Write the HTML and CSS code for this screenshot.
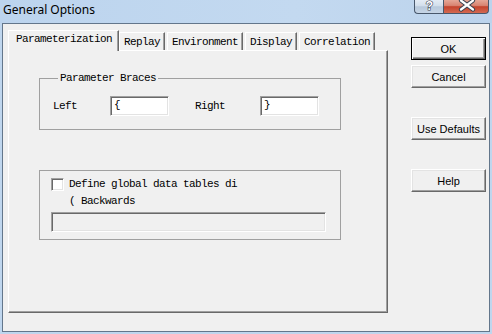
FILE: index.html
```html
<!DOCTYPE html>
<html>
<head>
<meta charset="utf-8">
<link rel="stylesheet" href="styles.css">
</head>
<body>
<div class="window">
  <div class="titlebar">
    <span class="title">General Options</span>
    <div class="caption">
      <div class="cbtn help">
        <svg width="29" height="14" viewBox="0 0 29 14"><text x="14.5" y="11" text-anchor="middle" class="qmark">?</text></svg>
      </div>
      <div class="cbtn close">
        <svg width="46" height="14" viewBox="0 0 46 14">
          <path d="M17 1.5 L29 10.5 M29 1.5 L17 10.5" stroke="#3a4250" stroke-width="4.2" stroke-linecap="round"/>
          <path d="M17 1.5 L29 10.5 M29 1.5 L17 10.5" stroke="#ffffff" stroke-width="2.2" stroke-linecap="round"/>
        </svg>
      </div>
    </div>
  </div>
  <div class="client">
    <div class="tabctl">
      <div class="tabs">
        <div class="tab selected">Parameterization</div>
        <div class="tab">Replay</div>
        <div class="tab">Environment</div>
        <div class="tab">Display</div>
        <div class="tab">Correlation</div>
      </div>
      <div class="panel">
        <fieldset class="group g1">
          <legend>Parameter Braces</legend>
          <div class="row">
            <span class="lbl lbl-left">Left</span>
            <div class="edit">{</div>
            <span class="lbl lbl-right">Right</span>
            <div class="edit">}</div>
          </div>
        </fieldset>
        <div class="group g2">
          <div class="checkrow"><span class="check"></span><span>Define global data tables di</span></div>
          <div class="line2">( Backwards</div>
          <div class="edit disabled wide"></div>
        </div>
      </div>
    </div>
    <div class="btns">
      <div class="btn default">OK</div>
      <div class="btn">Cancel</div>
      <div class="btn gap">Use Defaults</div>
      <div class="btn gap">Help</div>
    </div>
  </div>
</div>
</body>
</html>
```
FILE: styles.css
```css
html, body { margin: 0; padding: 0; }
body { background: #bfd6ee; }

.window {
  width: 492px;
  height: 334px;
  display: flex;
  flex-direction: column;
  background: #bfd6ee;
  overflow: hidden;
}

.titlebar {
  height: 23px;
  flex: none;
  display: flex;
  justify-content: space-between;
  align-items: flex-start;
  background: linear-gradient(90deg, #bcd4ee, #c3d9f0 60%, #bcd3ec);
}
.title {
  font-family: "Noto Sans", sans-serif;
  font-size: 12px;
  line-height: 16px;
  margin: 2px 0 0 3px;
  color: #000;
}
.caption { display: flex; margin-right: 3px; }
.cbtn {
  height: 14px;
  box-sizing: border-box;
  border: 1px solid #48586c;
  border-top: none;
}
.cbtn svg { display: block; margin-top: -1px; }
.help {
  width: 29px;
  border-right: none;
  border-bottom-left-radius: 4px;
  background: linear-gradient(#e4ecf5 0%, #d2deeb 45%, #b8c9dc 52%, #c6d5e6 100%);
}
.qmark {
  font-family: "Liberation Sans", sans-serif;
  font-weight: bold;
  font-size: 12px;
  fill: #fff;
  stroke: #3a4250;
  stroke-width: 1.2px;
  paint-order: stroke;
}
.close {
  width: 46px;
  border-bottom-right-radius: 4px;
  background: linear-gradient(#e5a797 0%, #d88472 42%, #c4432d 52%, #d46a52 100%);
}

.client {
  flex: 1;
  margin: 0 2px 2px 2px;
  border: 1px solid #63768b;
  background: #f0f0f0;
  display: flex;
  align-items: flex-start;
  padding: 6px 0 0 5px;
  box-sizing: border-box;
}

.tabctl {
  width: 380px;
  display: flex;
  flex-direction: column;
  font-family: "Liberation Mono", monospace;
  font-size: 11px;
  letter-spacing: -0.6px;
  color: #000;
}
.tabs {
  display: flex;
  align-items: flex-end;
  height: 20px;
  position: relative;
  z-index: 1;
}
.tab {
  height: 18px;
  box-sizing: border-box;
  border-top: 1px solid #fff;
  border-left: 1px solid #fff;
  border-right: 1px solid #696969;
  box-shadow: inset -1px 0 0 #a0a0a0;
  padding: 0 4px 0 4px;
  line-height: 18px;
  margin-right: 2px;
  background: #f0f0f0;
  white-space: nowrap;
}
.tab.selected {
  height: 21px;
  margin-bottom: -1px;
  margin-right: 0;
  padding: 0 6px 0 7px;
  line-height: 17px;
}

.panel {
  height: 263px;
  box-sizing: border-box;
  border: 1px solid;
  border-color: #fff #696969 #696969 #fff;
  box-shadow: inset -1px -1px 0 #a0a0a0;
  padding: 20px 0 0 30px;
}

.group {
  width: 302px;
  box-sizing: border-box;
  margin: 0;
  border: 1px solid #a0a0a0;
}
.g1 {
  padding: 11px 0 13px 13px;
}
.g1 legend {
  padding: 0 2px;
  margin-left: 5px;
  line-height: 14px;
}
.row {
  display: flex;
  align-items: center;
  height: 20px;
}
.lbl { line-height: 14px; }
.lbl-left { width: 57px; }
.lbl-right { width: 65px; margin-left: 26px; }

.edit {
  width: 59px;
  height: 20px;
  box-sizing: border-box;
  border: 1px solid;
  border-color: #a0a0a0 #fff #fff #a0a0a0;
  box-shadow: inset 1px 1px 0 #696969, inset -1px -1px 0 #e3e3e3;
  background: #fff;
  padding: 1px 0 0 3px;
  line-height: 14px;
}
.edit.disabled { background: #f0f0f0; }
.edit.wide { width: 275px; margin-top: 3px; }

.g2 {
  margin-top: 40px;
  padding: 5px 0 7px 11px;
}
.checkrow {
  display: flex;
  align-items: center;
  height: 16px;
}
.check {
  width: 13px;
  height: 13px;
  box-sizing: border-box;
  border: 1px solid;
  border-color: #a0a0a0 #fff #fff #a0a0a0;
  box-shadow: inset 1px 1px 0 #696969, inset -1px -1px 0 #e3e3e3;
  background: #fff;
  margin-right: 5px;
}
.line2 {
  height: 16px;
  line-height: 16px;
  margin-top: 1px;
  padding-left: 18px;
}

.btns {
  display: flex;
  flex-direction: column;
  width: 75px;
  margin: 7px 0 0 23px;
}
.btn {
  height: 23px;
  box-sizing: border-box;
  border: 1px solid;
  border-color: #fff #696969 #696969 #fff;
  box-shadow: inset -1px -1px 0 #a0a0a0, inset 1px 1px 0 #e3e3e3;
  background: #f0f0f0;
  font-family: "Liberation Sans", sans-serif;
  font-size: 11px;
  color: #000;
  display: flex;
  align-items: center;
  justify-content: center;
  margin-top: 5px;
}
.btn.default {
  margin-top: 0;
  border-color: #000;
  box-shadow: inset 1px 1px 0 #fff, inset -1px -1px 0 #696969, inset -2px -2px 0 #a0a0a0;
}
.btn.gap { margin-top: 29px; }
```
